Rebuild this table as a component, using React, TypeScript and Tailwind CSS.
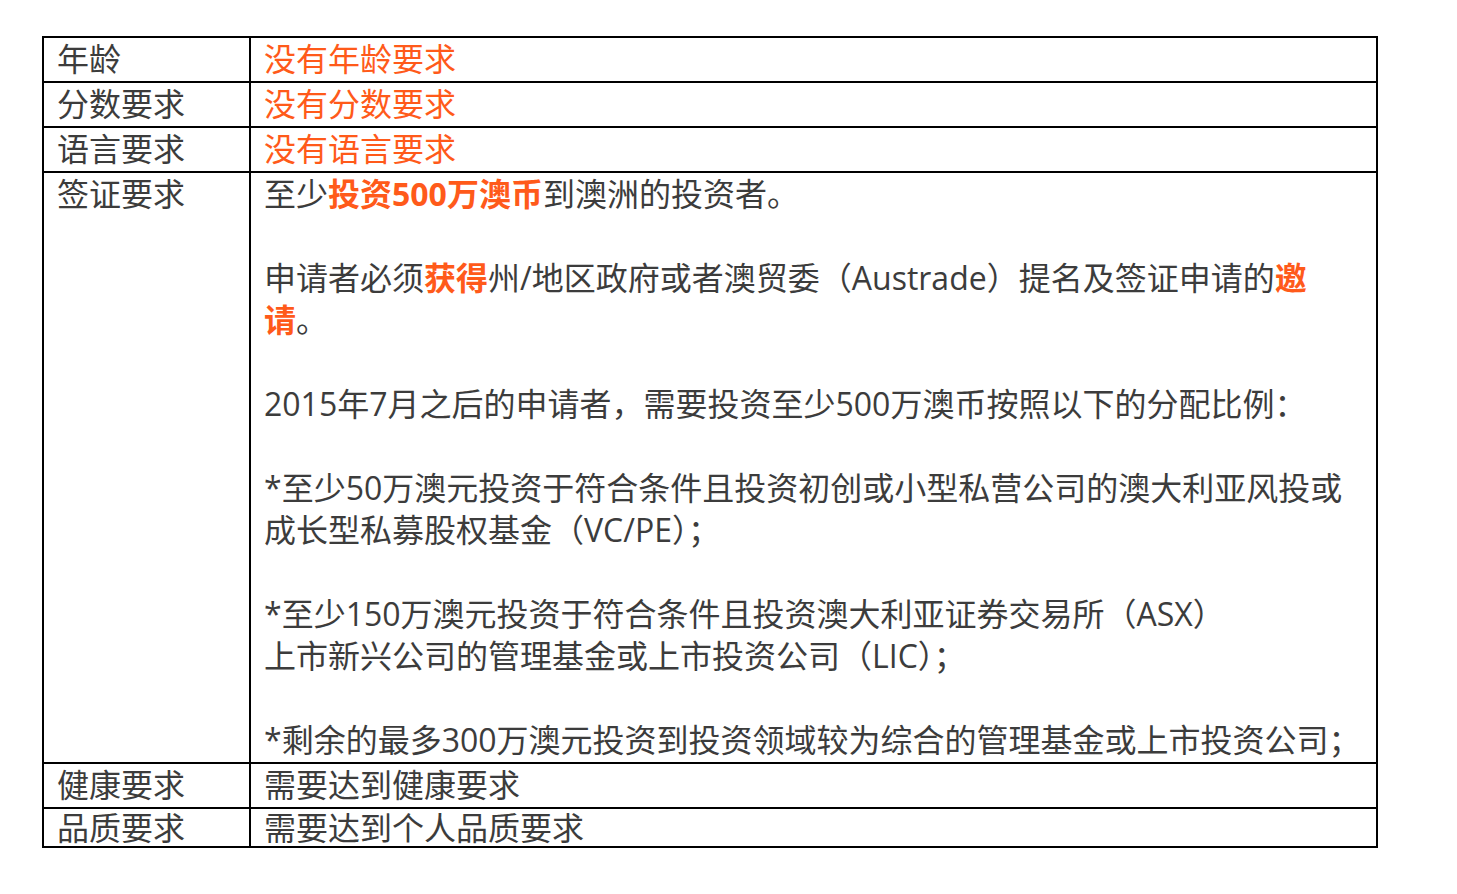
const orange = "text-[#ff5a1a]";

function Row({ label, children, last }: { label: string; children: React.ReactNode; last?: boolean }) {
  const cell = "border-2 border-black px-[13px] align-top " + (last ? "leading-[37px]" : "pb-px");
  return (
    <tr>
      <td className={"w-[207px] " + cell}>{label}</td>
      <td className={cell}>{children}</td>
    </tr>
  );
}

export default function App() {
  return (
    <div
      className="min-h-screen bg-white pl-[42px] pt-[36px] text-[32px] leading-[42px] text-[#3c3c3c]"
      style={{ fontFamily: '"Open Sans", "Noto Sans CJK SC", sans-serif' }}
    >
      <table className="w-[1336px] border-collapse border-2 border-black">
        <tbody>
          <Row label="年龄">
            <span className={orange}>没有年龄要求</span>
          </Row>
          <Row label="分数要求">
            <span className={orange}>没有分数要求</span>
          </Row>
          <Row label="语言要求">
            <span className={orange}>没有语言要求</span>
          </Row>
          <Row label="签证要求">
            <p>
              至少<b className={orange}>投资500万澳币</b>到澳洲的投资者。
            </p>
            <p>&nbsp;</p>
            <p>
              申请者必须<b className={orange}>获得</b>州/地区政府或者澳贸委（Austrade）提名及签证申请的
              <b className={orange}>邀</b>
              <br />
              <b className={orange}>请</b>。
            </p>
            <p>&nbsp;</p>
            <p>2015年7月之后的申请者，需要投资至少500万澳币按照以下的分配比例：</p>
            <p>&nbsp;</p>
            <p>
              *至少50万澳元投资于符合条件且投资初创或小型私营公司的澳大利亚风投或
              <br />
              成长型私募股权基金（VC/PE）；
            </p>
            <p>&nbsp;</p>
            <p>
              *至少150万澳元投资于符合条件且投资澳大利亚证券交易所（ASX）
              <br />
              上市新兴公司的管理基金或上市投资公司（LIC）；
            </p>
            <p>&nbsp;</p>
            <p>*剩余的最多300万澳元投资到投资领域较为综合的管理基金或上市投资公司；</p>
          </Row>
          <Row label="健康要求">需要达到健康要求</Row>
          <Row label="品质要求" last>
            需要达到个人品质要求
          </Row>
        </tbody>
      </table>
    </div>
  );
}
